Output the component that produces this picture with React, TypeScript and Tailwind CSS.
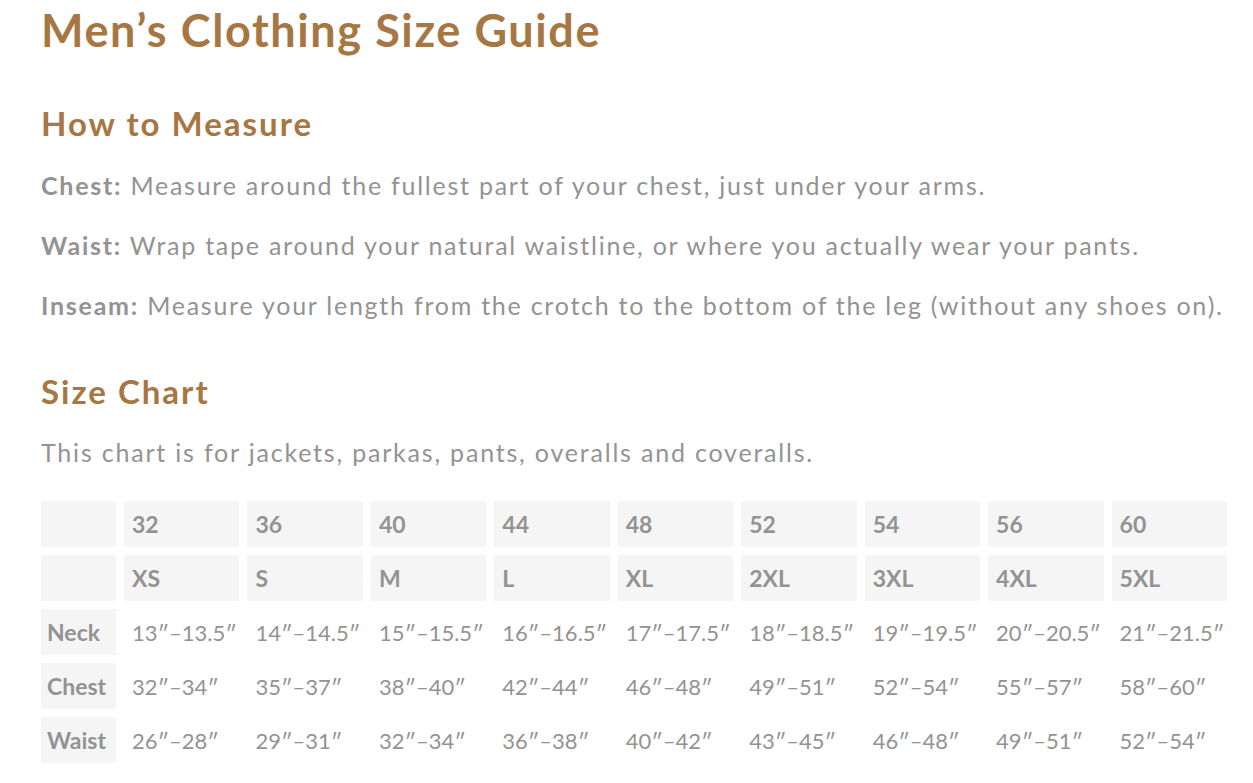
import React from 'react';

const sizes = ['32', '36', '40', '44', '48', '52', '54', '56', '60'];
const letters = ['XS', 'S', 'M', 'L', 'XL', '2XL', '3XL', '4XL', '5XL'];
const rows: { label: string; values: string[] }[] = [
  {
    label: 'Neck',
    values: ['13″–13.5″', '14″–14.5″', '15″–15.5″', '16″–16.5″', '17″–17.5″', '18″–18.5″', '19″–19.5″', '20″–20.5″', '21″–21.5″'],
  },
  {
    label: 'Chest',
    values: ['32″–34″', '35″–37″', '38″–40″', '42″–44″', '46″–48″', '49″–51″', '52″–54″', '55″–57″', '58″–60″'],
  },
  {
    label: 'Waist',
    values: ['26″–28″', '29″–31″', '32″–34″', '36″–38″', '40″–42″', '43″–45″', '46″–48″', '49″–51″', '52″–54″'],
  },
];

const tips = [
  { label: 'Chest:', text: 'Measure around the fullest part of your chest, just under your arms.' },
  { label: 'Waist:', text: 'Wrap tape around your natural waistline, or where you actually wear your pants.' },
  { label: 'Inseam:', text: 'Measure your length from the crotch to the bottom of the leg (without any shoes on).' },
];

export default function App() {
  return (
    <div className="min-h-screen bg-white pl-[41px] pt-[3px] text-[#939393] font-['Lato',sans-serif]">
      <h1 className="text-[45px] font-bold leading-[54px] tracking-[1.6px] text-[#a67743]">Men’s Clothing Size Guide</h1>

      <h2 className="mt-[44px] text-[33px] font-bold leading-[44px] tracking-[2px] text-[#a67743]">How to Measure</h2>
      <div className="mt-[24px] flex flex-col gap-[28px]">
        {tips.map((t) => (
          <p key={t.label} className="text-[25px] leading-[32px] tracking-[1.75px] whitespace-nowrap">
            <strong className="font-bold">{t.label}</strong> {t.text}
          </p>
        ))}
      </div>

      <h2 className="mt-[48px] text-[33px] font-bold leading-[44px] tracking-[2px] text-[#a67743]">Size Chart</h2>
      <p className="mt-[23px] text-[25px] leading-[32px] tracking-[1.8px]">This chart is for jackets, parkas, pants, overalls and coveralls.</p>

      <div className="mt-[33px] grid w-[1186px] grid-cols-[75px_repeat(9,1fr)] gap-[8px]">
        <div className="h-[46px] bg-[#f5f5f5]" />
        {sizes.map((s) => (
          <div key={s} className="flex h-[46px] items-center bg-[#f5f5f5] pl-[8px] text-[23px] font-bold">
            {s}
          </div>
        ))}
        <div className="h-[46px] bg-[#f5f5f5]" />
        {letters.map((s) => (
          <div key={s} className="flex h-[46px] items-center bg-[#f5f5f5] pl-[8px] text-[23px] font-bold">
            {s}
          </div>
        ))}
        {rows.map((r) => (
          <React.Fragment key={r.label}>
            <div className="flex h-[46px] items-center bg-[#f5f5f5] pl-[6px] text-[23px] font-bold">{r.label}</div>
            {r.values.map((v, i) => (
              <div key={i} className="flex h-[46px] items-center whitespace-nowrap pl-[8px] text-[22px]">
                {v}
              </div>
            ))}
          </React.Fragment>
        ))}
      </div>
    </div>
  );
}
